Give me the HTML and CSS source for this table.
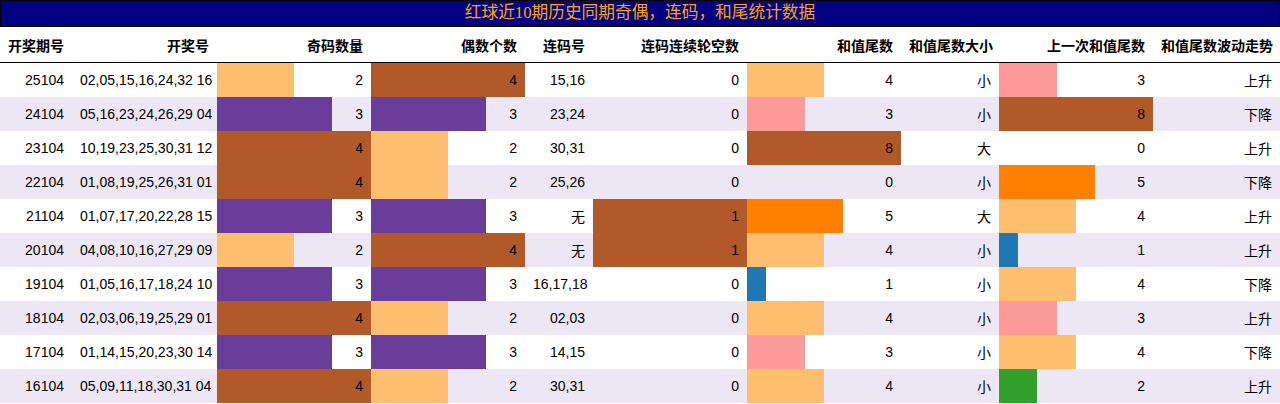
FILE: index.html
```html
<!DOCTYPE html>
<html lang="zh">
<head>
<meta charset="utf-8">
<title>红球近10期历史同期奇偶，连码，和尾统计数据</title>
<link rel="stylesheet" href="styles.css">
</head>
<body>
<div class="caption">红球近10期历史同期奇偶，连码，和尾统计数据</div>
<table class="grid">
<colgroup>
<col class="w72"><col class="w145"><col class="w154"><col class="w154"><col class="w68"><col class="w154"><col class="w154"><col class="w98"><col class="w154"><col class="w127">
</colgroup>
<thead>
<tr><th>开奖期号</th><th>开奖号</th><th>奇码数量</th><th>偶数个数</th><th>连码号</th><th>连码连续轮空数</th><th>和值尾数</th><th>和值尾数大小</th><th>上一次和值尾数</th><th>和值尾数波动走势</th></tr>
</thead>
<tbody>
<tr><td>25104</td><td>02,05,15,16,24,32 16</td><td class="bar lo" style="--w:50%">2</td><td class="bar br" style="--w:100%">4</td><td>15,16</td><td>0</td><td class="bar lo" style="--w:50%">4</td><td>小</td><td class="bar pk" style="--w:37.5%">3</td><td>上升</td></tr>
<tr><td>24104</td><td>05,16,23,24,26,29 04</td><td class="bar pu" style="--w:75%">3</td><td class="bar pu" style="--w:75%">3</td><td>23,24</td><td>0</td><td class="bar pk" style="--w:37.5%">3</td><td>小</td><td class="bar br" style="--w:100%">8</td><td>下降</td></tr>
<tr><td>23104</td><td>10,19,23,25,30,31 12</td><td class="bar br" style="--w:100%">4</td><td class="bar lo" style="--w:50%">2</td><td>30,31</td><td>0</td><td class="bar br" style="--w:100%">8</td><td>大</td><td>0</td><td>上升</td></tr>
<tr><td>22104</td><td>01,08,19,25,26,31 01</td><td class="bar br" style="--w:100%">4</td><td class="bar lo" style="--w:50%">2</td><td>25,26</td><td>0</td><td>0</td><td>小</td><td class="bar or" style="--w:62.5%">5</td><td>下降</td></tr>
<tr><td>21104</td><td>01,07,17,20,22,28 15</td><td class="bar pu" style="--w:75%">3</td><td class="bar pu" style="--w:75%">3</td><td>无</td><td class="bar br" style="--w:100%">1</td><td class="bar or" style="--w:62.5%">5</td><td>大</td><td class="bar lo" style="--w:50%">4</td><td>上升</td></tr>
<tr><td>20104</td><td>04,08,10,16,27,29 09</td><td class="bar lo" style="--w:50%">2</td><td class="bar br" style="--w:100%">4</td><td>无</td><td class="bar br" style="--w:100%">1</td><td class="bar lo" style="--w:50%">4</td><td>小</td><td class="bar bl" style="--w:12.5%">1</td><td>上升</td></tr>
<tr><td>19104</td><td>01,05,16,17,18,24 10</td><td class="bar pu" style="--w:75%">3</td><td class="bar pu" style="--w:75%">3</td><td>16,17,18</td><td>0</td><td class="bar bl" style="--w:12.5%">1</td><td>小</td><td class="bar lo" style="--w:50%">4</td><td>下降</td></tr>
<tr><td>18104</td><td>02,03,06,19,25,29 01</td><td class="bar br" style="--w:100%">4</td><td class="bar lo" style="--w:50%">2</td><td>02,03</td><td>0</td><td class="bar lo" style="--w:50%">4</td><td>小</td><td class="bar pk" style="--w:37.5%">3</td><td>上升</td></tr>
<tr><td>17104</td><td>01,14,15,20,23,30 14</td><td class="bar pu" style="--w:75%">3</td><td class="bar pu" style="--w:75%">3</td><td>14,15</td><td>0</td><td class="bar pk" style="--w:37.5%">3</td><td>小</td><td class="bar lo" style="--w:50%">4</td><td>下降</td></tr>
<tr><td>16104</td><td>05,09,11,18,30,31 04</td><td class="bar br" style="--w:100%">4</td><td class="bar lo" style="--w:50%">2</td><td>30,31</td><td>0</td><td class="bar lo" style="--w:50%">4</td><td>小</td><td class="bar gr" style="--w:25%">2</td><td>上升</td></tr>
</tbody>
</table>
</body>
</html>
```
FILE: styles.css
```css
html, body {
  margin: 0;
  padding: 0;
  background: #ffffff;
}
body {
  width: 1280px;
  font-family: "Liberation Sans", "Noto Sans CJK SC", sans-serif;
  font-size: 14px;
  color: #000000;
}
.caption {
  box-sizing: border-box;
  height: 27px;
  border: 1px solid #000000;
  background: #000080;
  color: #ffa500;
  font-family: "Liberation Serif", "Noto Sans CJK SC", serif;
  font-size: 16.7px;
  line-height: 24px;
  text-align: center;
}
.grid {
  width: 1280px;
  table-layout: fixed;
  border-collapse: collapse;
  border-spacing: 0;
}
.w72 { width: 72px; }
.w145 { width: 145px; }
.w154 { width: 154px; }
.w68 { width: 68px; }
.w98 { width: 98px; }
.w127 { width: 127px; }
.grid th {
  height: 35px;
  padding: 0 8px;
  text-align: right;
  font-weight: bold;
  border-bottom: 1px solid #000000;
  white-space: nowrap;
  vertical-align: middle;
}
.grid td {
  height: 34px;
  padding: 0 8px;
  text-align: right;
  white-space: nowrap;
  vertical-align: middle;
}
.grid tbody tr:nth-child(even) {
  background: #ede7f5;
}
.bar {
  background: linear-gradient(90deg, var(--c) var(--w), transparent var(--w));
}
.lo { --c: #fdbf6f; }
.br { --c: #b15928; }
.pu { --c: #6a3d9a; }
.pk { --c: #fb9a99; }
.or { --c: #ff7f00; }
.bl { --c: #1f78b4; }
.gr { --c: #33a02c; }
```
